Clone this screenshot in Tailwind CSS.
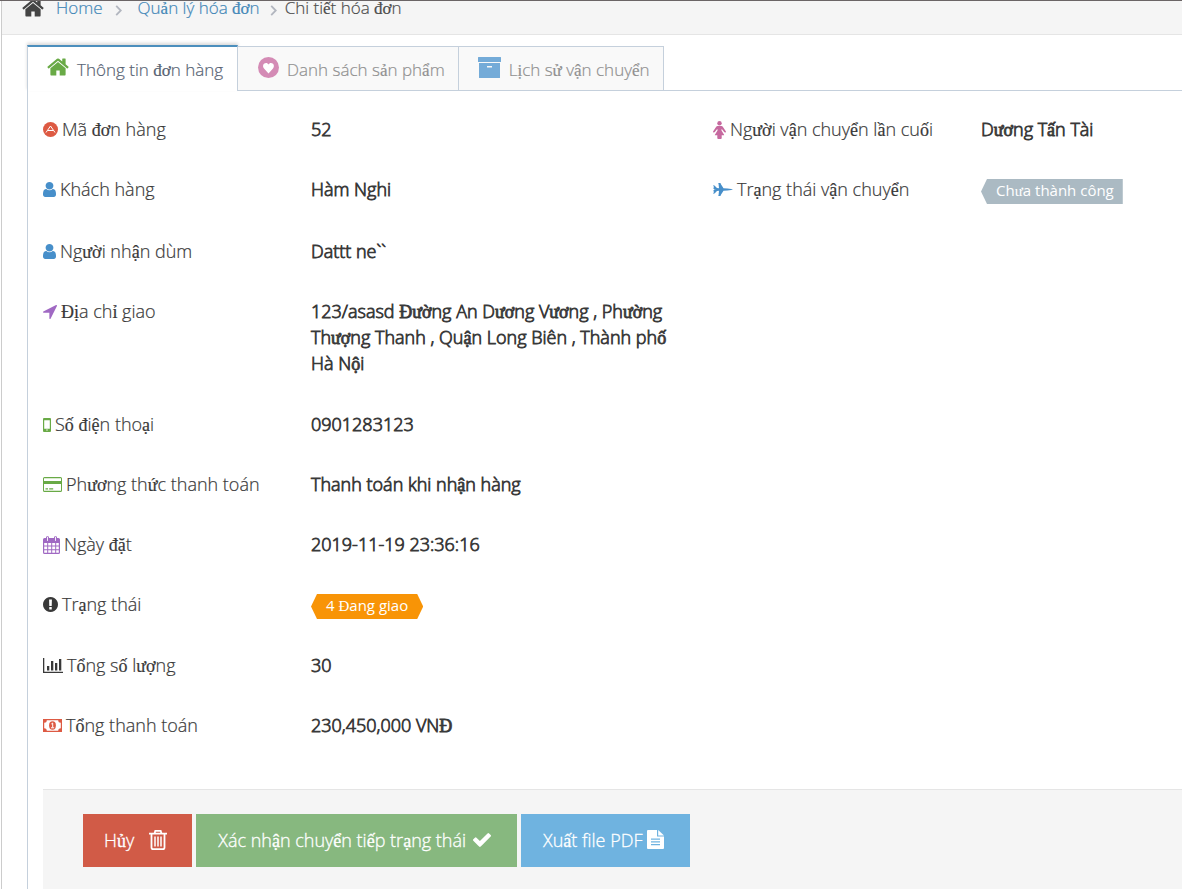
<!DOCTYPE html>
<html lang="vi">
<head>
<meta charset="utf-8">
<meta name="viewport" content="width=device-width, initial-scale=1">
<title>Chi tiết hóa đơn</title>
<script src="https://cdn.jsdelivr.net/npm/@tailwindcss/browser@4"></script>
</head>
<body class="flex min-h-screen flex-col border-t border-[#6b6566] bg-white pl-px font-['Open_Sans',sans-serif] text-lg font-light text-[#393939] [-webkit-text-stroke:0.2px]">
<div class="flex grow flex-col border-l border-[#ccc]">
  <nav aria-label="Breadcrumb" class="h-[34px] border-b border-[#e5e5e5] bg-[#f5f5f5] pl-5 text-[17px] leading-6 text-[#4d4d4d]">
    <ol class="-mt-[5px] flex items-center">
      <li class="flex items-center">
        <svg class="mr-3 w-[22px] h-[22px] fill-[#444]" viewBox="64 64 1664 1664" aria-hidden="true"><use href="#home"/></svg>
        <a href="#" class="text-[#4488b8]">Home</a>
      </li>
      <li class="flex items-center">
        <svg class="ml-3 mr-4 mt-1 h-[11px] w-[7px] fill-none stroke-[#b2b6bf] stroke-2" viewBox="0 0 7 12" aria-hidden="true"><path d="M1 1l5 5-5 5"/></svg>
        <a href="#" class="text-[#4488b8]">Quản lý hóa đơn</a>
      </li>
      <li class="flex items-center" aria-current="page">
        <svg class="ml-2.5 mr-2 mt-1 h-[11px] w-[7px] fill-none stroke-[#b2b6bf] stroke-2" viewBox="0 0 7 12" aria-hidden="true"><path d="M1 1l5 5-5 5"/></svg>
        <span>Chi tiết hóa đơn</span>
      </li>
    </ol>
  </nav>

  <main class="flex grow flex-col pl-[25px] pt-[10px]">
    <ul class="flex items-end border-b border-[#c5d0dc] text-[17px] leading-6">
      <li class="-mb-px">
        <a href="#" aria-current="true" class="flex h-[46px] items-center gap-2 border-x border-t-2 border-x-[#c5d0dc] border-t-[#4c8fbd] bg-white pl-[19px] pr-[14px] text-[#576373] shadow-[0_-2px_3px_0_rgba(0,0,0,0.15)]">
          <svg class="-mt-1 h-[22px] w-[22px] fill-[#69aa46]" viewBox="64 64 1664 1664" aria-hidden="true"><use href="#home"/></svg>
          <span class="pt-0.5">Thông tin đơn hàng</span>
        </a>
      </li>
      <li>
        <a href="#" class="flex h-[44px] items-center gap-2 border-r border-t border-[#c5d0dc] bg-[#f9f9f9] pl-5 pr-[13px] text-[#909090]">
          <svg class="-mt-0.5 h-[21px] w-[21px]" viewBox="0 0 21 21" aria-hidden="true"><circle cx="10.500" cy="10.500" r="10.500" fill="#d48bb5"/><path fill="#fff" d="M10.500 16.500L6 11.500C4 9 5.500 6 8 6c1.200 0 2 .7 2.500 1.500C11 6.700 11.800 6 13 6c2.500 0 4 3 2 5.500z"/></svg>
          <span class="pt-0.5">Danh sách sản phẩm</span>
        </a>
      </li>
      <li>
        <a href="#" class="flex h-[44px] items-center gap-2 border-r border-t border-[#c5d0dc] bg-[#f9f9f9] pl-[19px] pr-[13px] text-[#909090]">
          <svg class="-mt-0.5 h-[21px] w-[23px]" viewBox="0 0 23 21" aria-hidden="true"><path fill="#74abd8" fill-rule="evenodd" d="M.5 0h22q.5 0 .5.500v4.500H0V.5Q0 0 .5 0zM1 6h21v14.500q0 .5-.5.500h-20q-.5 0-.5-.500zM9 9v1.500h5V9z"/></svg>
          <span class="pt-0.5">Lịch sử vận chuyển</span>
        </a>
      </li>
    </ul>

    <section class="flex grow flex-col border-l border-[#c5d0dc] pl-[15px] pt-[25px]">
      <div class="grid grid-cols-[10fr_7fr] leading-[27px]">
        <dl class="flex flex-col gap-[33px]">
          <div class="grid grid-cols-[4fr_6fr]">
            <dt class="flex items-center gap-1">
              <svg class="h-[15px] w-[15px]" viewBox="0 0 15 15" aria-hidden="true"><circle cx="7.500" cy="7.500" r="7.500" fill="#dd5a43"/><path d="M3 10.500L7.500 4l4.500 6.500M5 8.500h5" fill="none" stroke="#fff" stroke-width="1"/></svg>
              Mã đơn hàng</dt>
            <dd class="[-webkit-text-stroke:0.8px]">52</dd>
          </div>
          <div class="grid grid-cols-[4fr_6fr] pb-[2px]">
            <dt class="flex items-center gap-1">
              <svg class="h-[15px] w-[13px] fill-[#478fca]" viewBox="256 128 1280 1536" preserveAspectRatio="none" aria-hidden="true"><use href="#user"/></svg>
              Khách hàng</dt>
            <dd class="[-webkit-text-stroke:0.8px]">Hàm Nghi</dd>
          </div>
          <div class="grid grid-cols-[4fr_6fr]">
            <dt class="flex items-center gap-1">
              <svg class="h-[15px] w-[13px] fill-[#478fca]" viewBox="256 128 1280 1536" preserveAspectRatio="none" aria-hidden="true"><use href="#user"/></svg>
              Người nhận dùm</dt>
            <dd class="[-webkit-text-stroke:0.8px]">Dattt ne``</dd>
          </div>
          <div class="grid grid-cols-[4fr_6fr] items-start pb-[2px]">
            <dt class="flex items-center gap-1">
              <svg class="h-[14px] w-[14px] fill-[#a069c3]" viewBox="192 256 1408 1408" aria-hidden="true"><path d="M1593 349l-640 1280q-17 35-57 35-5 0-15-2-22-5-35.500-22.500t-13.500-39.500v-576h-576q-22 0-39.500-13.500t-22.500-35.500 4-42 29-30l1280-640q13-7 29-7 27 0 45 19 15 14 18.500 34.500t-6.500 39.500z"/></svg>
              Địa chỉ giao</dt>
            <dd class="pr-6 leading-[26px] [-webkit-text-stroke:0.8px]">123/asasd Đường An Dương Vương , Phường Thượng Thanh , Quận Long Biên , Thành phố Hà Nội</dd>
          </div>
          <div class="grid grid-cols-[4fr_6fr]">
            <dt class="flex items-center gap-1">
              <svg class="h-[14px] w-[8px]" viewBox="0 0 8 14" aria-hidden="true"><path fill="#69aa46" fill-rule="evenodd" d="M1 0h6q1 0 1 1v12q0 1-1 1H1q-1 0-1-1V1q0-1 1-1zM1.200 2.200v8.600h5.600V2.200zM3.300 12a.7.7 0 1 0 1.400 0 .7.7 0 1 0-1.400 0z"/></svg>
              Số điện thoại</dt>
            <dd class="[-webkit-text-stroke:0.8px]">0901283123</dd>
          </div>
          <div class="grid grid-cols-[4fr_6fr]">
            <dt class="flex items-center gap-1">
              <svg class="h-[15px] w-[19px]" viewBox="0 0 19 15" aria-hidden="true"><path fill="#69aa46" fill-rule="evenodd" d="M1.500 0h16Q19 0 19 1.500v12q0 1.500-1.500 1.500h-16Q0 15 0 13.500v-12Q0 0 1.500 0zM1 1.200V4h17V1.200zM1 7v6.800h17V7zM2.500 11.300h2.500v1.200H2.500zM6.200 11.300h4v1.200h-4z"/></svg>
              Phương thức thanh toán</dt>
            <dd class="[-webkit-text-stroke:0.8px]">Thanh toán khi nhận hàng</dd>
          </div>
          <div class="grid grid-cols-[4fr_6fr]">
            <dt class="flex items-center gap-1">
              <svg class="h-[18px] w-[17px]" viewBox="0 0 17 18" aria-hidden="true"><path fill="#a069c3" fill-rule="evenodd" d="M1.500 2H3V1.500Q3 0 4.500 0T6 1.500V2h5v-.5Q11 0 12.500 0T14 1.500V2h1.500Q17 2 17 3.500v13q0 1.500-1.500 1.500h-14Q0 18 0 16.500v-13Q0 2 1.500 2zM1.200 7v2.600h3V7zm4 0v2.600h3V7zm4 0v2.600h3V7zm4 0v2.600h2.600V7zm-12 3.500v2.700h3v-2.700zm4 0v2.700h3v-2.700zm4 0v2.700h3v-2.700zm4 0v2.700h2.600v-2.700zm-12 3.700v2.600h3v-2.600zm4 0v2.600h3v-2.600zm4 0v2.600h3v-2.600zm4 0v2.600h2.600v-2.600z"/><path d="M4.500 1.200v3.300M12.500 1.200v3.300" stroke="#fff" stroke-width=".9" stroke-linecap="round"/></svg>
              Ngày đặt</dt>
            <dd class="[-webkit-text-stroke:0.8px]">2019-11-19 23:36:16</dd>
          </div>
          <div class="grid grid-cols-[4fr_6fr] items-start">
            <dt class="flex items-center gap-1">
              <svg class="h-[15px] w-[15px] fill-[#393939]" viewBox="128 128 1536 1536" aria-hidden="true"><path d="M896 128q209 0 385.500 103t279.500 279.500 103 385.500-103 385.500-279.500 279.500-385.500 103-385.500-103-279.500-279.500-103-385.500 103-385.500 279.500-279.500 385.500-103zm128 1247v-190q0-14-9-23.500t-22-9.500h-192q-13 0-23 10t-10 23v190q0 13 10 23t23 10h192q13 0 22-9.500t9-23.500zm-2-344l18-621q0-12-10-18-10-8-24-8h-220q-14 0-24 8-10 6-10 18l17 621q0 10 10 17.500t24 7.500h185q14 0 23.500-7.500t10.500-17.500z"/></svg>
              Trạng thái</dt>
            <dd class="pt-[3px]"><span class="block h-[25px] w-fit bg-[#f89406] px-[15px] text-[15px] leading-[23px] font-normal text-white [-webkit-text-stroke:0] [clip-path:polygon(6px_0,calc(100%-6px)_0,100%_50%,calc(100%-6px)_100%,6px_100%,0_50%)]">4 Đang giao</span></dd>
          </div>
          <div class="grid grid-cols-[4fr_6fr]">
            <dt class="flex items-center gap-1">
              <svg class="h-[15px] w-[20px]" viewBox="0 0 20 15" aria-hidden="true"><path fill="#393939" d="M0 0h1.300v13.700H20V15H0zM4 8h2.300v4.500H4zM8 3h2.300v9.500H8zM12 5h2.300v7.500H12zM16 1h2.300v11.500H16z"/></svg>
              Tổng số lượng</dt>
            <dd class="[-webkit-text-stroke:0.8px]">30</dd>
          </div>
          <div class="grid grid-cols-[4fr_6fr]">
            <dt class="flex items-center gap-1">
              <svg class="h-[13px] w-[19px]" viewBox="0 0 19 13" aria-hidden="true"><path fill="#dd5a43" fill-rule="evenodd" d="M0 0h19v13H0zM3.800 1.300Q3.800 3.800 1.200 3.800v5.400q2.600 0 2.600 2.500h11.400q0-2.500 2.600-2.500V3.800q-2.600 0-2.600-2.500z"/><ellipse cx="9.500" cy="6.500" rx="3.400" ry="4.200" fill="#dd5a43"/><path d="M8.300 5l1.400-1v4.500M8 8.800h3.200" fill="none" stroke="#fff" stroke-width="1"/></svg>
              Tổng thanh toán</dt>
            <dd class="[-webkit-text-stroke:0.8px]">230,450,000 VNĐ</dd>
          </div>
        </dl>

        <dl class="flex flex-col gap-[33px]">
          <div class="grid grid-cols-[4fr_3fr]">
            <dt class="flex items-center gap-1">
              <svg class="h-[18px] w-[13px] fill-[#c6699f]" viewBox="0 0 13 18" aria-hidden="true"><circle cx="6.500" cy="2.200" r="2.200"/><path d="M4.500 5h4q.8 0 1.300.7l3 4.500q.4.700-.2 1.200-.8.500-1.400-.3L9 8.300h-.5v1.200l2.600 4.200q.2.600-.5.600H8.700v2.800q0 .9-.9.900H5.200q-.9 0-.9-.9v-2.800H2.400q-.7 0-.5-.6l2.600-4.200V8.300H4L1.800 11.100q-.6.800-1.400.3-.6-.5-.2-1.200l3-4.500Q3.700 5 4.500 5z"/></svg>
              Người vận chuyển lần cuối</dt>
            <dd class="[-webkit-text-stroke:0.8px]">Dương Tấn Tài</dd>
          </div>
          <div class="grid grid-cols-[4fr_3fr] items-start">
            <dt class="flex items-center gap-1">
              <svg class="h-[13px] w-[20px] fill-[#478fca]" viewBox="0 0 20 13" aria-hidden="true"><path d="M0 2.500h1.500L4 5l2 .2L5.500.3H5V0h3v.3h-.7l3.200 4.900 4 .3q4.500.3 5.500 1-1 .7-5.500 1l-4 .3-3.200 4.900H8v.3H5v-.3h.5L6 7.800 4 8l-2.500 2.500H0V10h.7V7.500H.3v-.4h.7v-.3L3 6.500 1 6.200v-.3H.3v-.4h.4V3H0z"/></svg>
              Trạng thái vận chuyển</dt>
            <dd class="pt-[3px]"><span class="block h-[25px] w-fit bg-[#abbac3] pl-[15px] pr-[9px] text-[15px] leading-[23px] font-normal whitespace-nowrap text-white [-webkit-text-stroke:0] [clip-path:polygon(6px_0,100%_0,100%_100%,6px_100%,0_50%)]">Chưa thành công</span></dd>
          </div>
        </dl>
      </div>

      <div class="mt-[50px] grow border-t border-[#e5e5e5] bg-[#f5f5f5] px-10 pt-6 pb-5">
        <div class="flex gap-1 text-white [text-shadow:0_-1px_0_rgba(0,0,0,0.25)] [-webkit-text-stroke:0.3px]">
          <button type="button" class="flex h-[53px] items-center gap-[15px] bg-[#d15b47] pl-[21px] pr-[25px] pb-[2px]">
            <span>Hủy</span>
            <svg class="h-5 w-[18px]" viewBox="0 0 18 20" fill="none" stroke="#fff" aria-hidden="true"><path stroke-width="1.800" d="M0 3.700h18M5.500 3.500L6.300.9h5.400l.8 2.600M2.500 4v13.500q0 1.700 1.500 1.700h10q1.500 0 1.500-1.700V4"/><path stroke-width="1.500" d="M6 6.500v10M9 6.500v10M12 6.500v10"/></svg>
          </button>
          <button type="button" class="flex h-[53px] items-center gap-[7px] bg-[#87b87f] pl-[22px] pr-[26px] pb-[2px]">
            <span>Xác nhận chuyển tiếp trạng thái</span>
            <svg class="h-[14px] w-[18px] fill-white" viewBox="121 334 1550 1188" aria-hidden="true"><path d="M1671 566q0 40-28 68l-724 724-136 136q-28 28-68 28t-68-28l-136-136-362-362q-28-28-28-68t28-68l136-136q28-28 68-28t68 28l294 295 656-657q28-28 68-28t68 28l136 136q28 28 28 68z"/></svg>
          </button>
          <button type="button" class="flex h-[53px] items-center gap-[5px] bg-[#6fb3e0] pl-[22px] pr-[26px] pb-[2px]">
            <span>Xuất file PDF</span>
            <svg class="h-[19px] w-[17px] fill-white" viewBox="0 0 17 19" aria-hidden="true"><path fill-rule="evenodd" d="M1 0h9v6.500h7V18q0 1-1 1H1q-1 0-1-1V1q0-1 1-1zM4 8.500v1.200h9V8.500zM4 11.200v1.200h9v-1.200zM4 14v1.200h9V14z"/><path d="M11.200 0L17 5.500h-5.800z"/></svg>
          </button>
        </div>
      </div>
    </section>
  </main>
</div>

<svg class="hidden" aria-hidden="true">
  <defs>
    <path id="home" d="M1472 992v480q0 26-19 45t-45 19h-384v-384h-256v384h-384q-26 0-45-19t-19-45v-480q0-1 .5-3t.5-3l575-474 575 474q1 2 1 6zm223-69l-62 74q-8 9-21 11h-3q-13 0-21-7l-692-577-692 577q-12 8-24 7-13-2-21-11l-62-74q-8-10-7-23.500t11-21.500l719-599q32-26 76-26t76 26l244 204v-195q0-14 9-23t23-9h192q14 0 23 9t9 23v408l219 182q10 8 11 21.500t-7 23.500z"/>
    <path id="user" d="M1536 1399q0 109-62.500 187t-150.500 78h-854q-88 0-150.500-78t-62.500-187q0-85 8.500-160.500t31.500-152 58.500-131 94-89 134.500-34.500q131 128 313 128t313-128q76 0 134.500 34.500t94 89 58.500 131 31.500 152 8.500 160.500zm-256-887q0 159-112.500 271.500t-271.500 112.500-271.500-112.500-112.500-271.500 112.500-271.500 271.500-112.500 271.500 112.500 112.500 271.500z"/>
  </defs>
</svg>

<script>
// Vietnamese letters outside Latin-1 are set in the serif face.
const walker = document.createTreeWalker(document.querySelector('body > div'), NodeFilter.SHOW_TEXT);
const nodes = [];
while (walker.nextNode()) nodes.push(walker.currentNode);
for (const node of nodes) {
  const text = node.data.replace(/\s+/g, ' ');
  if (!/[\u0100-\u1eff]/.test(text)) continue;
  const run = document.createElement('span');
  for (const part of text.trim().split(/([\u0100-\u1eff]+)/)) {
    if (!part) continue;
    if (/[\u0100-\u1eff]/.test(part)) {
      const letter = document.createElement('span');
      letter.className = "font-['Liberation_Serif',serif] leading-none";
      letter.textContent = part;
      run.append(letter);
    } else run.append(part);
  }
  node.replaceWith(run);
}
</script>
</body>
</html>
